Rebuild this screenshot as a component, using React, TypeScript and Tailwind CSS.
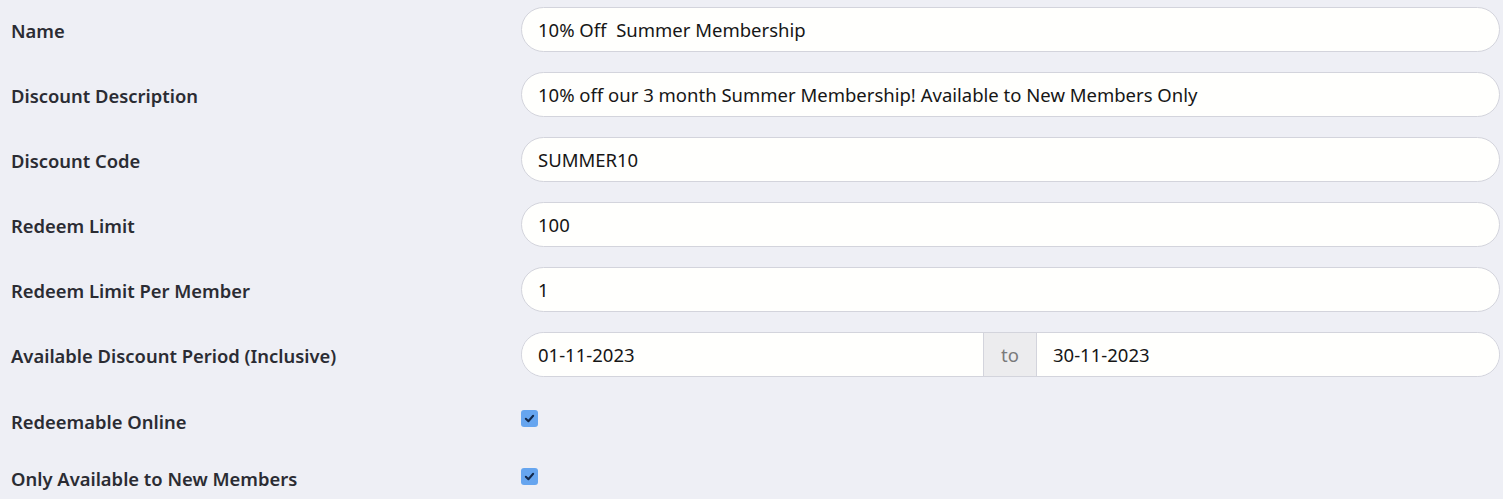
import React from 'react';

const rows = [
  { label: 'Name', value: '10% Off  Summer Membership' },
  { label: 'Discount Description', value: '10% off our 3 month Summer Membership! Available to New Members Only' },
  { label: 'Discount Code', value: 'SUMMER10' },
  { label: 'Redeem Limit', value: '100' },
  { label: 'Redeem Limit Per Member', value: '1' },
];

function Checkbox() {
  return (
    <div className="w-[17px] h-[17px] rounded-[3px] bg-[#66a5ef] flex items-center justify-center">
      <svg width="11" height="11" viewBox="0 0 12 12">
        <path d="M2 6.3 L4.8 9 L10 3" fill="none" stroke="#13294b" strokeWidth="2.2" strokeLinecap="round" strokeLinejoin="round" />
      </svg>
    </div>
  );
}

const labelCls = 'w-[510px] pt-[2px] font-[580] text-[18.4px] text-[#2b2c33]';

export default function App() {
  return (
    <div className="w-[1503px] h-[499px] bg-[#eeeff5] overflow-hidden pt-[7px] pl-[11px] pr-[3px] text-[18.5px] font-['Noto_Sans',sans-serif]">
      <div className="flex flex-col gap-[20px]">
        {rows.map(r => (
          <div key={r.label} className="flex items-center h-[45px]">
            <div className={labelCls}>{r.label}</div>
            <div className="flex-1 h-full rounded-full bg-[#fffffd] border border-[#d3d4dc] flex items-center px-[16px] text-[#161616] whitespace-pre">
              {r.value}
            </div>
          </div>
        ))}
        <div className="flex items-center h-[45px]">
          <div className={labelCls}>Available Discount Period (Inclusive)</div>
          <div className="flex-1 h-full flex rounded-full border border-[#d3d4dc] overflow-hidden text-[#161616]">
            <div className="w-[461px] bg-[#fffffd] flex items-center px-[16px]">01-11-2023</div>
            <div className="w-[54px] bg-[#ececee] border-x border-[#d3d4dc] flex items-center justify-center text-[#7a7a7a]">to</div>
            <div className="flex-1 bg-[#fffffd] flex items-center px-[16px]">30-11-2023</div>
          </div>
        </div>
      </div>
      <div className="flex items-center h-[48px] mt-[20px]">
        <div className={labelCls}>Redeemable Online</div>
        <div className="-mt-[5px]"><Checkbox /></div>
      </div>
      <div className="flex items-center h-[48px] mt-[9px]">
        <div className={labelCls}>Only Available to New Members</div>
        <div className="-mt-[4px]"><Checkbox /></div>
      </div>
    </div>
  );
}
